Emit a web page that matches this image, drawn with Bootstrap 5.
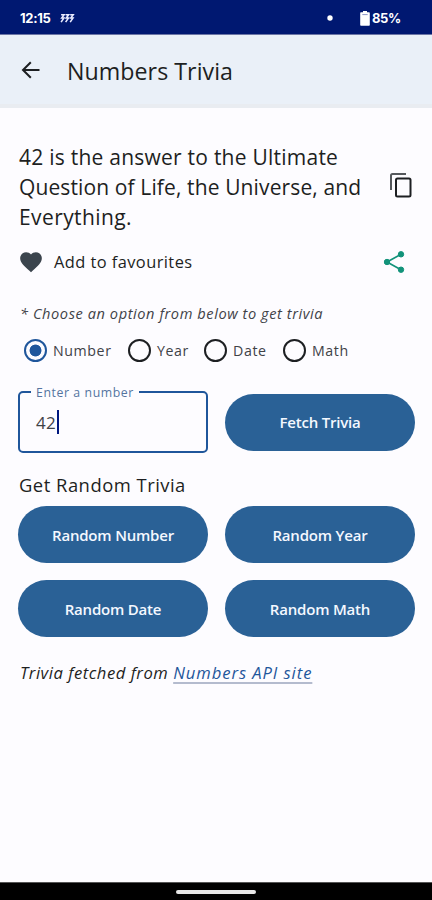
<!DOCTYPE html>
<html lang="en">
<head>
<meta charset="utf-8">
<meta name="viewport" content="width=device-width, initial-scale=1">
<title>Numbers Trivia</title>
<link href="https://cdn.jsdelivr.net/npm/bootstrap@5.3.0/dist/css/bootstrap.min.css" rel="stylesheet">
<style>
  body { font-family: "Open Sans", "Noto Sans", sans-serif; background: #fdfcff; color: #1d1f22; }
  .screen { width: 432px; height: 900px; }
  .statusbar { height: 35px; background: #001871; border-bottom: 1px solid #6c76a6; padding: 2px 31px 0 20px; font: 700 13px/1 "Inter", sans-serif; letter-spacing: -.3px; }
  .dot { margin-left: auto; margin-right: 27px; }
  .charge { margin-left: 2px; }
  .appbar { height: 73px; background: #eaf0f8; border-bottom: 4px solid #e9ecf1; padding: 2px 19px 0; }
  .appbar h1 { font-size: 23.2px; letter-spacing: .05px; line-height: 30px; margin-left: 24px; }
  .content { padding: 0 17px 0 18px; }
  .trivia { height: 90px; margin-top: 34px; font-size: 21px; line-height: 30px; letter-spacing: .24px; }
  .trivia p { padding-left: 1px; }
  .trivia .second { letter-spacing: .12px; }
  .trivia .third { letter-spacing: .4px; }
  .trivia svg { margin-bottom: 4px; margin-right: 1px; }
  .favourite { height: 30px; margin-top: 15px; font-size: 16.4px; letter-spacing: .44px; }
  .favourite span { margin-left: 10px; }
  .favourite .share { margin-left: auto; margin-right: 9px; }
  .hint { margin-top: 25px; font-size: 14.6px; line-height: 22px; letter-spacing: .57px; color: #3f4247; padding-left: 2px; }
  .choices { height: 30px; margin-top: 11px; font-size: 14.2px; color: #3f4247; padding-left: 6px; letter-spacing: .6px; }
  .choices label { margin-left: 6px; padding-top: 1px; }
  .choices .w-number { width: 75px; }
  .choices .w-year { width: 47px; }
  .choices .w-date { width: 50px; }
  .choices .form-check-input { width: 23px; height: 23px; margin: 0; border: 2px solid #1d1f22; background-color: transparent; box-shadow: none; }
  .choices .form-check-input:checked { border-color: #1f569b; background-image: radial-gradient(circle, #1f569b 5.6px, transparent 6.3px); }
  .pair { display: grid; grid-template-columns: 190px 190px; gap: 17px; }
  .entry { margin-top: 26px; }
  .field { height: 62px; border: 2px solid #1f569b; border-radius: 5px; padding: 2px 16px 0; font-size: 17px; letter-spacing: .4px; color: #3f4247; }
  .field label { top: -9px; left: 11px; padding: 0 5px; background: #fdfcff; color: #54749f; font-size: 12.3px; line-height: 18px; letter-spacing: .58px; }
  .caret { width: 2px; height: 24px; background: #00187f; margin-left: 1px; margin-bottom: 3px; }
  .btn-fill { height: 57px; background: #2a6196; color: #f4f8ff; font-size: 15px; font-weight: 600; letter-spacing: -.2px; border: 0; padding-top: 7px; }
  .btn-fill:hover { background: #255687; color: #fff; }
  .subhead { margin: 18px 0 7px; font-size: 18.4px; line-height: 28px; letter-spacing: .5px; padding-left: 1px; }
  .credit { margin-top: 23px; font-size: 16.6px; line-height: 26px; letter-spacing: .53px; padding-left: 2px; }
  .credit a { color: #1f569b; text-decoration: underline #b4bbce 2px; text-underline-offset: 3px; text-decoration-skip-ink: none; letter-spacing: .94px; }
  .navpill { height: 18px; background: #000; border-top: 1px solid #555; }
  .navpill span { width: 80px; height: 4px; background: #e8e8e8; }
</style>
</head>
<body>
<div class="screen d-flex flex-column overflow-hidden">
  <div class="statusbar d-flex align-items-center text-white flex-shrink-0">
    <span>12:15</span>
    <svg class="ms-2" width="16" height="10" viewBox="0 0 16 11" fill="none" stroke="#e9ebff" stroke-width="1.700"><path d="M1.500 2H4.800L2.200 5.500H4.600L1.500 10M6.500 2H9.800L7.200 5.500H9.600L6.500 10M11.500 2H14.800L12.200 5.500H14.600L11.500 10"/></svg>
    <svg class="dot" width="6" height="6" viewBox="0 0 6 6"><circle cx="3" cy="3" r="2.700" fill="#fff"/></svg>
    <svg width="10" height="15" viewBox="0 0 10 15"><path d="M3 0h4v1.300h2q.8 0 .8.8v11.800q0 .8-.8.8H1q-.8 0-.8-.8V2.100q0-.8.8-.8h2z" fill="#fff"/><path d="M2.300 3.600h5.400" stroke="#8c96c8"/></svg>
    <span class="charge">85%</span>
  </div>

  <header class="appbar d-flex align-items-center flex-shrink-0">
    <svg width="24" height="24" viewBox="0 0 24 24" fill="none" stroke="#1d1f22" stroke-width="2"><path d="M20.500 11H4.500M11.800 3.200 4 11 11.800 18.800"/></svg>
    <h1 class="mb-0 fw-normal">Numbers Trivia</h1>
  </header>

  <main class="content flex-grow-1">
    <div class="trivia d-flex justify-content-between align-items-center">
      <p class="mb-0 text-nowrap">42 is the answer to the Ultimate<br><span class="second">Question of Life, the Universe, and</span><br><span class="third">Everything.</span></p>
      <svg class="flex-shrink-0" width="26" height="28" viewBox="0 0 26 28" fill="none"><path d="M3 19V4.500Q3 3 4.500 3H18" stroke="#55585c" stroke-width="2"/><rect x="8" y="7.500" width="14.500" height="18" rx="1.500" stroke="#1d1f22" stroke-width="2"/></svg>
    </div>

    <div class="favourite d-flex align-items-center">
      <svg width="26" height="26" viewBox="0 0 24 24" fill="#3b444d"><path d="M12 21.350l-1.450-1.320C5.400 15.360 2 12.280 2 8.500 2 5.420 4.420 3 7.500 3c1.740 0 3.410.81 4.500 2.090C13.090 3.810 14.760 3 16.500 3 19.580 3 22 5.420 22 8.500c0 3.780-3.400 6.860-8.550 11.540z"/></svg>
      <span>Add to favourites</span>
      <svg class="share" width="24" height="24" viewBox="0 0 24 24" fill="#12937a" stroke="#12937a"><path d="M19 4.300 5 12l14 7.700" fill="none" stroke-width="1.700"/><circle cx="19" cy="4.300" r="2.700"/><circle cx="5" cy="12" r="2.700"/><circle cx="19" cy="19.700" r="2.700"/></svg>
    </div>

    <p class="hint mb-0 fst-italic text-nowrap">* Choose an option from below to get trivia</p>

    <div class="choices d-flex align-items-center">
      <input class="form-check-input" type="radio" name="kind" id="kNumber" checked><label class="w-number" for="kNumber">Number</label>
      <input class="form-check-input" type="radio" name="kind" id="kYear"><label class="w-year" for="kYear">Year</label>
      <input class="form-check-input" type="radio" name="kind" id="kDate"><label class="w-date" for="kDate">Date</label>
      <input class="form-check-input" type="radio" name="kind" id="kMath"><label for="kMath">Math</label>
    </div>

    <div class="pair entry align-items-center">
      <div class="field position-relative d-flex align-items-center">
        <label class="position-absolute text-nowrap">Enter a number</label>
        <span>42</span><span class="caret"></span>
      </div>
      <button type="button" class="btn btn-fill rounded-pill">Fetch Trivia</button>
    </div>

    <h2 class="subhead fw-normal">Get Random Trivia</h2>
    <div class="pair">
      <button type="button" class="btn btn-fill rounded-pill">Random Number</button>
      <button type="button" class="btn btn-fill rounded-pill">Random Year</button>
      <button type="button" class="btn btn-fill rounded-pill">Random Date</button>
      <button type="button" class="btn btn-fill rounded-pill">Random Math</button>
    </div>

    <p class="credit mb-0 fst-italic text-nowrap">Trivia fetched from <a href="#">Numbers API site</a></p>
  </main>

  <footer class="navpill d-flex justify-content-center align-items-center flex-shrink-0"><span class="rounded-pill"></span></footer>
</div>
<script src="https://cdn.jsdelivr.net/npm/bootstrap@5.3.0/dist/js/bootstrap.bundle.min.js"></script>
</body>
</html>
